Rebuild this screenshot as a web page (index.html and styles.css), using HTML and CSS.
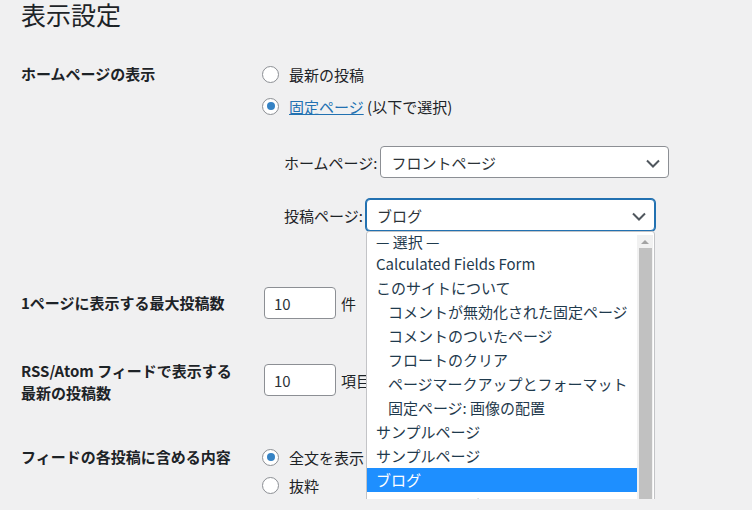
FILE: index.html
```html
<!DOCTYPE html>
<html>
    <head>
        <title>表示設定</title>

        <link rel="stylesheet" href="styles.css">
    </head>

    <body>
        <h1 class="page-title">表示設定</h1>

        <div class="form-table">
            <div class="form-row row-front">
                <div class="row-label">ホームページの表示</div>
                <div class="row-field">
                    <label class="radio-line">
                        <span class="radio"></span>最新の投稿
                    </label>
                    <label class="radio-line">
                        <span class="radio checked"></span><a class="link" href="#">固定ページ</a>&nbsp;(以下で選択)
                    </label>

                    <div class="page-selects">
                        <div class="select-line">
                            <span>ホームページ:</span>
                            <div class="select">
                                フロントページ
                                <svg class="chevron" width="16" height="16" viewBox="0 0 16 16">
                                    <path d="M2 5.5l6 6 6-6" fill="none" stroke="#50575e" stroke-width="2"/>
                                </svg>
                            </div>
                        </div>

                        <div class="select-line select-line-posts">
                            <span>投稿ページ:</span>
                            <div class="select-wrap">
                                <div class="select focused">
                                    ブログ
                                    <svg class="chevron" width="16" height="16" viewBox="0 0 16 16">
                                        <path d="M2 5.5l6 6 6-6" fill="none" stroke="#50575e" stroke-width="2"/>
                                    </svg>
                                </div>

                                <div class="dropdown">
                                    <ul class="options">
                                        <li class="opt opt-first">— 選択 —</li>
                                        <li class="opt">Calculated Fields Form</li>
                                        <li class="opt">このサイトについて</li>
                                        <li class="opt child">コメントが無効化された固定ページ</li>
                                        <li class="opt child">コメントのついたページ</li>
                                        <li class="opt child">フロートのクリア</li>
                                        <li class="opt child">ページマークアップとフォーマット</li>
                                        <li class="opt child">固定ページ: 画像の配置</li>
                                        <li class="opt">サンプルページ</li>
                                        <li class="opt">サンプルページ</li>
                                        <li class="opt selected">ブログ</li>
                                        <li class="opt">フロントページ</li>
                                    </ul>

                                    <div class="scrollbar">
                                        <div class="scroll-arrow"></div>
                                        <div class="scroll-thumb"></div>
                                    </div>
                                </div>
                            </div>
                        </div>
                    </div>
                </div>
            </div>

            <div class="form-row row-posts">
                <div class="row-label">1ページに表示する最大投稿数</div>
                <div class="row-field field-inline">
                    <div class="num-input">10</div>
                    <span>件</span>
                </div>
            </div>

            <div class="form-row row-rss">
                <div class="row-label">RSS/Atom フィードで表示する<br>最新の投稿数</div>
                <div class="row-field field-inline">
                    <div class="num-input">10</div>
                    <span>項目</span>
                </div>
            </div>

            <div class="form-row row-feed">
                <div class="row-label">フィードの各投稿に含める内容</div>
                <div class="row-field">
                    <label class="radio-line">
                        <span class="radio checked"></span>全文を表示
                    </label>
                    <label class="radio-line">
                        <span class="radio"></span>抜粋
                    </label>
                </div>
            </div>
        </div>
    </body>
</html>
```

FILE: styles.css
```css
html {
    overflow: hidden;
}

body {
    margin: 0;
    padding-left: 21px;

    font-family: "Noto Sans CJK JP", "Noto Sans", sans-serif;
    font-size: 15px;
    color: #1d2327;
    background-color: #f0f0f1;
}

.page-title {
    margin: 0;
    font-size: 25px;
    font-weight: 400;
    line-height: 29px;
}

.form-row {
    display: flex;
}

.row-label {
    width: 241px;
    flex-shrink: 0;
    font-weight: 700;
}

.row-front {
    margin-top: 29px;
}

.row-front .row-label {
    line-height: 32px;
}

.radio-line {
    display: flex;
    align-items: center;
    height: 32px;
}

.radio {
    box-sizing: border-box;
    width: 17px;
    height: 17px;
    margin-right: 10px;

    border: 1px solid #8c8f94;
    border-radius: 50%;
    background-color: white;
    position: relative;
}

.radio.checked::after {
    content: "";
    position: absolute;
    left: 3.5px;
    top: 3.5px;
    width: 8px;
    height: 8px;
    border-radius: 50%;
    background-color: #3582c4;
}

.link {
    color: #2271b1;
}

.page-selects {
    margin-top: 24px;
    padding-left: 22px;
}

.select-line {
    display: flex;
    align-items: center;
    gap: 3px;
}

.select-line-posts {
    margin-top: 21px;
}

.select-wrap {
    position: relative;
}

.select {
    box-sizing: border-box;
    width: 289px;
    height: 32px;
    padding-left: 10px;

    display: flex;
    align-items: center;
    position: relative;

    color: #2c3338;
    background-color: white;
    border: 1px solid #8c8f94;
    border-radius: 4px;
}

.select.focused {
    border-color: #2271b1;
    box-shadow: 0 0 0 1px #2271b1;
}

.chevron {
    position: absolute;
    right: 7px;
    top: 8px;
}

.dropdown {
    box-sizing: border-box;
    position: absolute;
    left: 0;
    top: 100%;
    width: 289px;
    height: 300px;
    overflow: hidden;

    background-color: white;
    border: 1px solid #c3c4c7;
    border-radius: 3px 3px 0 0;
    z-index: 2;
}

.options {
    margin: 0;
    padding: 0;
    list-style: none;
}

.opt {
    height: 24px;
    padding-left: 9px;
    margin-right: 17px;

    line-height: 24px;
    color: #1f3a4d;
    white-space: nowrap;
}

.opt-first {
    height: 20px;
    line-height: 20px;
}

.opt.child {
    padding-left: 21px;
}

.opt.selected {
    color: white;
    background-color: #1e8fff;
}

.scrollbar {
    position: absolute;
    right: 1px;
    top: 3px;
    bottom: 0;
    width: 16px;
    background-color: #f1f1f1;
}

.scroll-arrow {
    width: 0;
    height: 0;
    margin: 5px auto 0;

    border-left: 4px solid transparent;
    border-right: 4px solid transparent;
    border-bottom: 4px solid #a3a3a3;
}

.scroll-thumb {
    width: 13px;
    height: 280px;
    margin: 4px 0 0 2px;
    background-color: #c1c1c1;
}

.row-posts {
    margin-top: 56px;
    align-items: center;
}

.row-posts .row-label {
    line-height: 32px;
}

.field-inline {
    display: flex;
    align-items: center;
    gap: 5px;
}

.num-input {
    box-sizing: border-box;
    width: 72px;
    height: 32px;
    margin-left: 2px;
    padding-left: 9px;

    display: flex;
    align-items: center;

    color: #2c3338;
    background-color: white;
    border: 1px solid #8c8f94;
    border-radius: 4px;
}

.row-rss {
    margin-top: 41px;
    align-items: flex-start;
}

.row-rss .row-label {
    line-height: 22px;
}

.row-rss .row-field {
    margin-top: 4px;
}

.row-feed {
    margin-top: 39px;
}

.row-feed .row-label {
    line-height: 28px;
}

.row-feed .radio-line {
    height: 28px;
}
```
